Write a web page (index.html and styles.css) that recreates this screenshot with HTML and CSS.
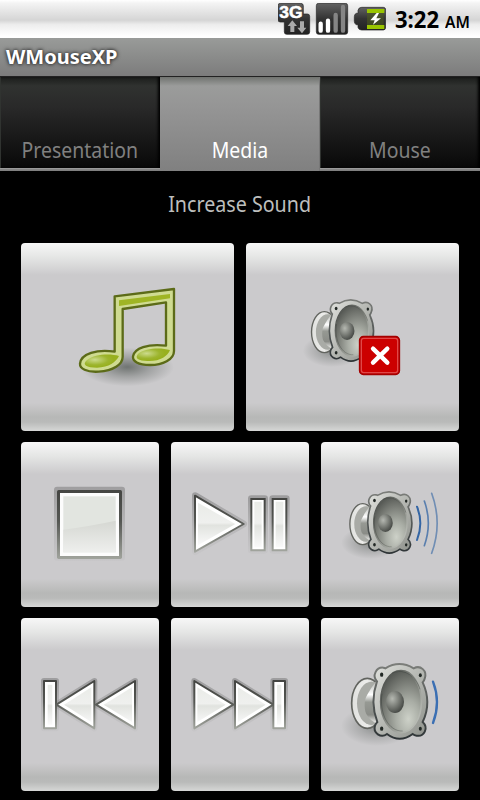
FILE: index.html
```html
<!DOCTYPE html>
<html lang="en">
<head>
<meta charset="utf-8">
<title>WMouseXP</title>
<link rel="stylesheet" href="styles.css">
</head>
<body>
<svg class="defs" width="0" height="0" aria-hidden="true">
  <defs>
    <linearGradient id="edge" x1="0" y1="0" x2="0" y2="1"><stop offset="0" stop-color="#444542"/><stop offset=".45" stop-color="#555753"/><stop offset="1" stop-color="#a0a39c"/></linearGradient>
    <linearGradient id="halo" x1="0" y1="0" x2="0" y2="1"><stop offset="0" stop-color="#555" stop-opacity=".38"/><stop offset=".55" stop-color="#555" stop-opacity=".16"/><stop offset="1" stop-color="#555" stop-opacity=".04"/></linearGradient>
    <linearGradient id="face" x1="0" y1="0" x2="0" y2="1"><stop offset="0" stop-color="#e9ebe7"/><stop offset=".47" stop-color="#eff0ee"/><stop offset=".53" stop-color="#e1e3df"/><stop offset="1" stop-color="#fafafa"/></linearGradient>
    <linearGradient id="shine" x1="0" y1="0" x2="0" y2="1"><stop offset="0" stop-color="#d5d7d2"/><stop offset="1" stop-color="#eeefed"/></linearGradient>
    <linearGradient id="rim" x1="0" y1="0" x2="1" y2="1"><stop offset="0" stop-color="#e2e3df"/><stop offset=".45" stop-color="#b9bbb6"/><stop offset="1" stop-color="#8d908a"/></linearGradient>
    <linearGradient id="rimEdge" x1="0" y1="0" x2="0" y2="1"><stop offset="0" stop-color="#7c7e7a"/><stop offset="1" stop-color="#2e3436"/></linearGradient>
    <radialGradient id="cone" cx=".68" cy=".78" r=".85"><stop offset="0" stop-color="#cdd1c8"/><stop offset=".35" stop-color="#a9ada5"/><stop offset=".75" stop-color="#737670"/><stop offset="1" stop-color="#50534f"/></radialGradient>
    <radialGradient id="dome" cx=".35" cy=".35" r=".7"><stop offset="0" stop-color="#b5b8b1"/><stop offset=".45" stop-color="#838680"/><stop offset="1" stop-color="#444743"/></radialGradient>
    <linearGradient id="coneEdge" x1="0" y1="0" x2="1" y2="1"><stop offset="0" stop-color="#3d403d"/><stop offset=".5" stop-color="#8b8e88"/><stop offset="1" stop-color="#c9ccc5"/></linearGradient>
    <linearGradient id="magnet" x1="0" y1="0" x2="1" y2="0"><stop offset="0" stop-color="#e0e1de"/><stop offset=".5" stop-color="#ededeb"/><stop offset="1" stop-color="#a4a6a1"/></linearGradient>
    <linearGradient id="neck" x1="0" y1="0" x2="0" y2="1"><stop offset="0" stop-color="#b4b6b1"/><stop offset=".32" stop-color="#fff"/><stop offset=".5" stop-color="#969993"/><stop offset=".8" stop-color="#8a8c87"/><stop offset="1" stop-color="#f2f2f0"/></linearGradient>
    <radialGradient id="shade"><stop offset="0" stop-color="#333b36" stop-opacity=".6"/><stop offset=".5" stop-color="#333b36" stop-opacity=".27"/><stop offset="1" stop-color="#333b36" stop-opacity="0"/></radialGradient>
    <radialGradient id="noteHead" cx=".3" cy=".4" r=".55"><stop offset="0" stop-color="#ccdb8c"/><stop offset=".7" stop-color="#9db52e"/><stop offset="1" stop-color="#98b01f"/></radialGradient>
    <linearGradient id="dark" x1="0" y1="0" x2="0" y2="1"><stop offset="0" stop-color="#626262"/><stop offset=".5" stop-color="#333"/><stop offset="1" stop-color="#222"/></linearGradient>
    <symbol id="speaker" viewBox="0 0 450 564" overflow="visible">
      <ellipse cx="186" cy="342" rx="108" ry="60" fill="url(#shade)" opacity=".75"/>
      <ellipse cx="157" cy="274" rx="47" ry="75" fill="url(#magnet)" stroke="#62645f" stroke-width="5"/>
      <ellipse cx="169" cy="274" rx="43" ry="65" fill="#a9aba6"/>
      <path d="M184 207C174 220 160 240 152 258C147 275 149 295 153 304C160 319 174 330 184 334Z" fill="url(#neck)"/>
      <path d="M211 169Q253 143 296 169C316 158 338 176 329 200Q327 207 323 211Q351 271 323 330C342 348 327 375 305 371Q298 370 293 366Q254 395 216 366C198 380 173 363 180 341Q182 335 187 330Q164 270 186 208C170 191 184 165 205 167Q209 168 211 169Z" fill="url(#rim)" stroke="url(#rimEdge)" stroke-width="6"/>
      <ellipse cx="258" cy="269" rx="61" ry="93" fill="url(#cone)" stroke="url(#coneEdge)" stroke-width="5"/>
      <path d="M232 184C265 167 302 190 315 232M201 245C192 305 221 359 263 357" fill="none" stroke="#252a27" stroke-width="3" opacity=".3"/>
      <ellipse cx="240" cy="270" rx="27" ry="33" fill="url(#dome)"/>
      <g fill="#222825"><ellipse cx="200" cy="188" rx="5" ry="6.500"/><ellipse cx="316" cy="190" rx="4.500" ry="6"/><ellipse cx="200" cy="350" rx="5" ry="6.500"/><ellipse cx="316" cy="350" rx="4.500" ry="6"/></g>
    </symbol>
  </defs>
</svg>

<header class="status">
  <svg class="status-icons" viewBox="54 9 324 96" aria-hidden="true">
    <path d="M61 10H122Q130 10 130 18V42H142Q149 42 149 49V96Q149 103 142 103H80Q73 103 73 96V66H61Q54 66 54 59V17Q54 10 61 10Z" fill="url(#dark)" stroke="#222" stroke-width="2"/>
    <text class="net" x="58" y="54" textLength="70" lengthAdjust="spacingAndGlyphs">3G</text>
    <path d="M97 61L111 78H103V96H91V78H83ZM126 100L112 83H120V64H132V83H139Z" fill="#aaa"/>
    <rect x="169" y="10" width="94" height="93" rx="7" fill="url(#dark)" stroke="#222" stroke-width="2"/>
    <g stroke-width="13" stroke-linecap="round"><path d="M182 92V71M204 92V62" stroke="#fff"/><path d="M227 92V45M249 92V21" stroke="#858585"/></g>
    <path d="M305 22H370Q377 22 377 30V81Q377 90 370 90H305Q296 90 294 82V74H289Q283 72 283 64V50Q283 42 289 40H294V31Q296 22 305 22Z" fill="url(#dark)" stroke="#222" stroke-width="2"/>
    <path d="M321 27H373V39H321ZM321 75H373V87H321Z" fill="#99c500"/><path d="M321 39H371V75H321Z" fill="#4c5a20" opacity=".6"/>
    <path d="M350 39L331 61H344L339 74L363 55H349L357 39Z" fill="#fff"/>
  </svg>
  <div class="clock"><span class="time">3:22</span><span class="ampm">AM</span></div>
</header>
<h1 class="titlebar"><span>WMouseXP</span></h1>
<nav class="tabs">
  <div class="tab"><span>Presentation</span></div>
  <div class="tab active"><span>Media</span></div>
  <div class="tab"><span>Mouse</span></div>
</nav>
<main>
  <p class="label"><span>Increase Sound</span></p>
  <div class="row row-a">
    <button aria-label="Music"><svg viewBox="18 24 639 564">
      <ellipse cx="337" cy="396" rx="140" ry="58" fill="url(#shade)"/>
      <path d="M299 184L477 162V348C477 374 443 390 405 390C369 390 352 378 354 364C358 340 398 325 453 332V202L323 222V365C323 388 295 408 251 410C214 412 194 401 195 386C198 356 246 342 299 350Z" fill="#cfdb91" stroke="#5c6b18" stroke-width="7" stroke-linejoin="round"/>
      <path d="M312 196L465 177V190L312 213Z" fill="#9fb524"/>
      <path d="M312 363C286 355 238 357 216 375C199 390 215 398 246 398C282 397 303 381 312 363Z" fill="url(#noteHead)"/>
      <path d="M465 345C436 336 389 340 371 355C355 371 373 379 402 378C438 378 458 363 465 345Z" fill="url(#noteHead)"/>
    </svg></button>
    <button aria-label="Mute"><svg viewBox="-132 -111 639 564">
      <use href="#speaker" width="450" height="564" transform="translate(-25.600 -68.500) scale(.82)"/>
      <rect x="209" y="170" width="119" height="113" rx="11" fill="#c00" stroke="#a40000" stroke-width="5"/>
      <rect x="214" y="175" width="109" height="103" rx="7" fill="none" stroke="#e04848" stroke-width="4"/>
      <path d="M249 206L292 248M292 206L249 248" stroke="#fff" stroke-width="13" stroke-linecap="round"/>
    </svg></button>
  </div>
  <div class="row row-b">
    <button aria-label="Stop"><svg viewBox="18 21 414 495">
      <rect x="117" y="155" width="213" height="222" rx="9" fill="url(#halo)"/>
      <rect x="126" y="165" width="195" height="207" rx="5" fill="url(#edge)"/>
      <rect x="135" y="174" width="177" height="189" fill="#fcfcfc"/>
      <rect x="145" y="184" width="157" height="168" fill="#e2e5e0"/>
      <path d="M145 284Q228 273 302 257V352H145Z" fill="url(#shine)"/>
    </svg></button>
    <button aria-label="Play or pause"><svg viewBox="18 21 414 495">
      <g fill="none" stroke="url(#halo)" stroke-width="20" stroke-linejoin="round"><path d="M91 182L236 267L91 350Z"/><path d="M259 191H299V346H259ZM323 191H364V346H323Z"/></g>
      <path d="M90 182L236 267L90 350Z" fill="#fff" stroke="url(#edge)" stroke-width="6" stroke-linejoin="round"/>
      <path d="M99 203L211 267L99 331Z" fill="url(#face)"/>
      <path d="M259 192H299V346H259ZM323 192H364V346H323Z" fill="#fff" stroke="url(#edge)" stroke-width="6"/>
      <path d="M268 200H290V337H268ZM332 200H355V337H332Z" fill="url(#face)"/>
    </svg></button>
    <button aria-label="Increase sound"><svg viewBox="18 21 414 495">
      <use href="#speaker" width="450" height="564" transform="translate(14.400 42.500) scale(.82)"/>
      <g fill="none" stroke="#3465a4" stroke-linecap="round"><path d="M306 215Q326 265 306 315" stroke-width="6"/><path d="M328 198Q352 265 328 332" stroke-width="5" opacity=".75"/><path d="M350 175Q383 265 350 355" stroke-width="5" opacity=".6"/></g>
    </svg></button>
  </div>
  <div class="row row-c">
    <button aria-label="Previous"><svg viewBox="18 18 414 519">
      <g fill="none" stroke="url(#halo)" stroke-width="18" stroke-linejoin="round"><path d="M87 207H123V349H87Z"/><path d="M238 207L124 278L238 349Z"/><path d="M360 207L243 278L360 349Z"/></g>
      <g fill="#fff" stroke="url(#edge)" stroke-width="6" stroke-linejoin="round"><path d="M87 207H123V349H87Z"/><path d="M238 207L124 278L238 349Z"/><path d="M360 207L243 278L360 349Z"/></g>
      <path d="M98 218H112V338H98ZM229 226L147 278L229 330ZM351 226L266 278L351 330Z" fill="url(#face)"/>
    </svg></button>
    <button aria-label="Next"><svg viewBox="18 18 414 519">
      <g fill="none" stroke="url(#halo)" stroke-width="18" stroke-linejoin="round"><path d="M88 207L205 278L88 349Z"/><path d="M210 207L325 278L210 349Z"/><path d="M325 207H360V349H325Z"/></g>
      <g fill="#fff" stroke="url(#edge)" stroke-width="6" stroke-linejoin="round"><path d="M88 207L205 278L88 349Z"/><path d="M210 207L325 278L210 349Z"/><path d="M325 207H360V349H325Z"/></g>
      <path d="M97 226L182 278L97 330ZM219 226L302 278L219 330ZM336 218H349V338H336Z" fill="url(#face)"/>
    </svg></button>
    <button aria-label="Decrease sound"><svg viewBox="18 18 414 519">
      <use href="#speaker" width="450" height="564"/>
      <path d="M354 209Q378 271 354 333" fill="none" stroke="#3b6fb3" stroke-width="7" stroke-linecap="round"/>
    </svg></button>
  </div>
</main>
</body>
</html>
```
FILE: styles.css
```css
* { box-sizing: border-box; }
body {
  margin: 0;
  width: 480px;
  height: 800px;
  overflow: hidden;
  background: #000;
  font-family: "Noto Sans", "Open Sans", sans-serif;
}
.defs { display: block; height: 0; }
.status {
  display: flex;
  height: 38px;
  padding: 3px 9px 0 0;
  justify-content: flex-end;
  background: linear-gradient(#fff 0, #f4f4f4 8%, #d5d5d5 53%, #ededed 65%, #fff 95%);
}
.status-icons { width: 108px; height: 32px; margin-right: 9px; }
.net { font: bold 49px "Liberation Sans", sans-serif; fill: #fff; stroke: #fff; stroke-width: 1.500px; }
.clock { width: 76px; display: flex; align-items: baseline; color: #000; line-height: 33px; white-space: nowrap; }
.time { font-size: 22.500px; font-weight: 700; width: 51px; }
.ampm { font-size: 16px; font-weight: 600; }
.time, .ampm { display: block; transform-origin: 0 50%; }
.time { transform: scaleX(.98); }
.ampm { transform: scaleX(.97); }
.titlebar {
  margin: 0;
  height: 39px;
  padding-left: 6px;
  font-size: 20px;
  font-weight: 700;
  line-height: 37px;
  color: #fff;
  text-shadow: 0 0 4px #222, 0 0 3px #444;
  background: linear-gradient(#999b99, #7c7c7c 97%, #222 98%);
}
.titlebar span, .tab span, .label span { display: inline-block; white-space: nowrap; }
.titlebar span { transform-origin: 0 50%; }
.tabs {
  display: grid;
  grid-template-columns: repeat(3, 160px);
  height: 94px;
  padding-bottom: 3px;
  background: linear-gradient(#000 91px, #aaa 91px, #888 92px, #7d7d7d);
}
.tab {
  height: 91px;
  padding-top: 57px;
  text-align: center;
  font-size: 22px;
  line-height: 30px;
  color: #808080;
  background: linear-gradient(#1b1d1b, #303230 9px, #292929 30px, #080808);
  box-shadow: inset -3px 0 3px -1px #000, inset 1px 0 #303330;
}
.tab.active {
  height: 94px;
  color: #fff;
  background: linear-gradient(#70736f, #9b9c9b 9px, #959595 30px, #808080);
  box-shadow: inset -1px 0 #777;
}
.tab span { transform: scaleX(.885); }
.label { margin: 0; height: 72px; padding-top: 18px; text-align: center; font-size: 21.500px; line-height: 30px; color: #bdbebd; }
.label span { transform: translateX(-.5px) scaleX(.915); }
.row { display: grid; gap: 12px; margin: 0 21px 11px; }
.row-a { grid-template-columns: 1fr 1fr; height: 188px; }
.row-b { grid-template-columns: repeat(3, 1fr); height: 165px; }
.row-c { grid-template-columns: repeat(3, 1fr); height: 173px; }
button {
  display: block;
  min-width: 0;
  padding: 0;
  border: 0;
  border-radius: 4px;
  overflow: hidden;
  background: linear-gradient(#f7f7f7, #e5e6e5 14px, #cbcacc 32px, #cbcacc calc(100% - 28px), #b7b8b7 calc(100% - 14px), #b9bab9 calc(100% - 9px), #d6d7d6);
}
button svg { display: block; width: 100%; height: 100%; }
```
